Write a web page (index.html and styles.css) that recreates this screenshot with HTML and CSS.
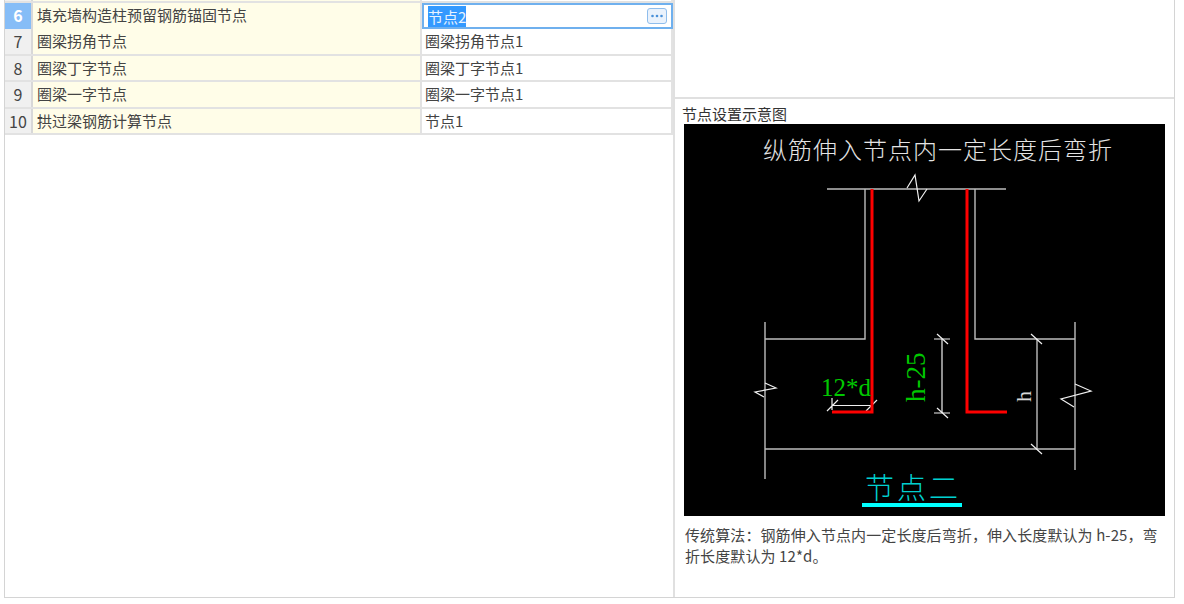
FILE: index.html
```html
<!DOCTYPE html>
<html lang="zh-CN">
<head>
<meta charset="utf-8">
<title>节点设置</title>
<link rel="stylesheet" href="styles.css">
</head>
<body>
<div class="frame">
  <div class="grid-pane">
    <div class="row row-clip"><div class="num"></div><div class="name"></div><div class="value"></div></div>
    <div class="row row-active">
      <div class="num">6</div>
      <div class="name">填充墙构造柱预留钢筋锚固节点</div>
      <div class="value editor">
        <span class="selected">节点2</span>
        <button class="more" type="button" aria-label="更多">
          <svg width="14" height="4" viewBox="0 0 14 4"><circle cx="2.5" cy="2" r="1.3"/><circle cx="7" cy="2" r="1.3"/><circle cx="11.5" cy="2" r="1.3"/></svg>
        </button>
      </div>
    </div>
    <div class="row"><div class="num">7</div><div class="name">圈梁拐角节点</div><div class="value">圈梁拐角节点1</div></div>
    <div class="row"><div class="num">8</div><div class="name">圈梁丁字节点</div><div class="value">圈梁丁字节点1</div></div>
    <div class="row"><div class="num">9</div><div class="name">圈梁一字节点</div><div class="value">圈梁一字节点1</div></div>
    <div class="row"><div class="num">10</div><div class="name">拱过梁钢筋计算节点</div><div class="value">节点1</div></div>
  </div>
  <div class="side-pane">
    <div class="side-top"></div>
    <div class="detail">
      <div class="caption">节点设置示意图</div>
      <svg class="diagram" width="481" height="392" viewBox="684 124 481 392">
        <rect x="684" y="124" width="481" height="392" fill="#000"/>
        <text class="t-title" x="763" y="159">纵筋伸入节点内一定长度后弯折</text>
        <g class="wall">
          <path d="M827 189H1006"/>
          <path d="M865 189V339H765M765 322V479"/>
          <path d="M975 189V339H1075M1075 322V470"/>
          <path d="M765 449H1075"/>
          <path d="M1037 339V449"/>
        </g>
        <g class="thin">
          <path d="M907 188L915 175L919 201L927 189"/>
          <path d="M765 383L776 388L755 392L764 397"/>
          <path d="M1075 384L1091 391L1061 399L1074 407"/>
          <path d="M1031 334L1042 344M1031 444L1042 454"/>
          <path d="M934 339H950M934 413H950M942 339V413"/>
          <path d="M937 334L948 344M937 408L948 418"/>
          <path d="M832 405.5H871M832 398V410M827 411L838 400M866 411L877 400"/>
        </g>
        <g class="rebar">
          <path d="M872 189V412H832"/>
          <path d="M967 189V412H1007"/>
        </g>
        <text class="t-green" x="821" y="396">12*d</text>
        <text class="t-green t-dim" transform="translate(925 402) rotate(-90)">h-25</text>
        <text class="t-h" transform="translate(1031 402) rotate(-90)">h</text>
        <text class="t-node" x="865" y="499">节点二</text>
        <rect x="862" y="503" width="100" height="4" fill="#00ffff"/>
      </svg>
      <p class="note">传统算法：钢筋伸入节点内一定长度后弯折，伸入长度默认为 h-25，弯折长度默认为 12*d。</p>
    </div>
  </div>
</div>
</body>
</html>
```
FILE: styles.css
```css
html, body {
  margin: 0;
  padding: 0;
  background: #fff;
}
body {
  width: 1184px;
  height: 604px;
  overflow: hidden;
  font-family: "Noto Sans CJK SC", "Noto Sans", sans-serif;
  color: #444;
}
.frame {
  display: flex;
  box-sizing: border-box;
  width: 1171px;
  height: 598px;
  margin-left: 4px;
  border: 1px solid #d4d4d4;
  border-top: 0;
}
.grid-pane {
  width: 669px;
  flex: none;
}
.row {
  display: grid;
  grid-template-columns: 28px 389px 251px;
  box-sizing: border-box;
  height: 26.4px;
  border-bottom: 2px solid #e2e2e2;
  font-size: 15px;
  line-height: 24.5px;
}
.row-clip {
  height: 3px;
}
.num, .name, .value {
  box-sizing: border-box;
  white-space: nowrap;
  overflow: hidden;
}
.num {
  background: #f0f0f0;
  border-right: 2px solid #d8d8d8;
  text-align: center;
  font-size: 16px;
}
.name {
  background: #fffde8;
  border-right: 2px solid #e2e2e2;
  padding-left: 4px;
}
.value {
  border-right: 2px solid #e2e2e2;
  padding-left: 3px;
}
.row-active .num {
  background: #86bdf7;
  color: #fff;
  font-weight: 700;
}
.editor {
  display: flex;
  align-items: center;
  justify-content: space-between;
  height: 26px;
  padding: 0 4px 0 4px;
  border: 2px solid #6fb0ee;
}
.selected {
  background: #3399ff;
  color: #e8f3ff;
  line-height: 21px;
}
.more {
  display: flex;
  align-items: center;
  justify-content: center;
  width: 20px;
  height: 16px;
  padding: 0;
  background: #eaf2fc;
  border: 1px solid #8fbdec;
  border-radius: 3px;
}
.more svg {
  fill: #4a90d9;
}
.side-pane {
  flex: 1;
  display: flex;
  flex-direction: column;
  border-left: 2px solid #e0e0e0;
  margin-left: -1px;
}
.side-top {
  height: 99px;
  flex: none;
  border-bottom: 2px solid #e0e0e0;
  box-sizing: border-box;
}
.detail {
  flex: 1;
  padding-left: 7px;
}
.caption {
  font-size: 15px;
  line-height: 20px;
  height: 25px;
  color: #333;
  margin-top: 5px;
}
.diagram {
  display: block;
  margin-left: 2px;
  margin-top: -5px;
}
.note {
  width: 476px;
  margin: 8px 0 0 3px;
  font-size: 15px;
  letter-spacing: 0.1px;
  line-height: 21px;
  color: #444;
}
.wall path {
  fill: none;
  stroke: #bdbdbd;
  stroke-width: 1.4;
}
.thin path {
  fill: none;
  stroke: #f0f0f0;
  stroke-width: 1.2;
}
.rebar path {
  fill: none;
  stroke: #ff0000;
  stroke-width: 3;
}
.t-title {
  font-size: 24px;
  font-weight: 300;
  letter-spacing: 1px;
  fill: #e4e4e4;
}
.t-green {
  font-family: "Liberation Serif", serif;
  font-size: 25px;
  fill: #00c800;
}
.t-dim {
  font-size: 27px;
}
.t-h {
  font-family: "Liberation Serif", serif;
  font-size: 22px;
  fill: #d8d8d8;
}
.t-node {
  font-size: 29px;
  font-weight: 300;
  letter-spacing: 3px;
  fill: #00d0d0;
}
```
